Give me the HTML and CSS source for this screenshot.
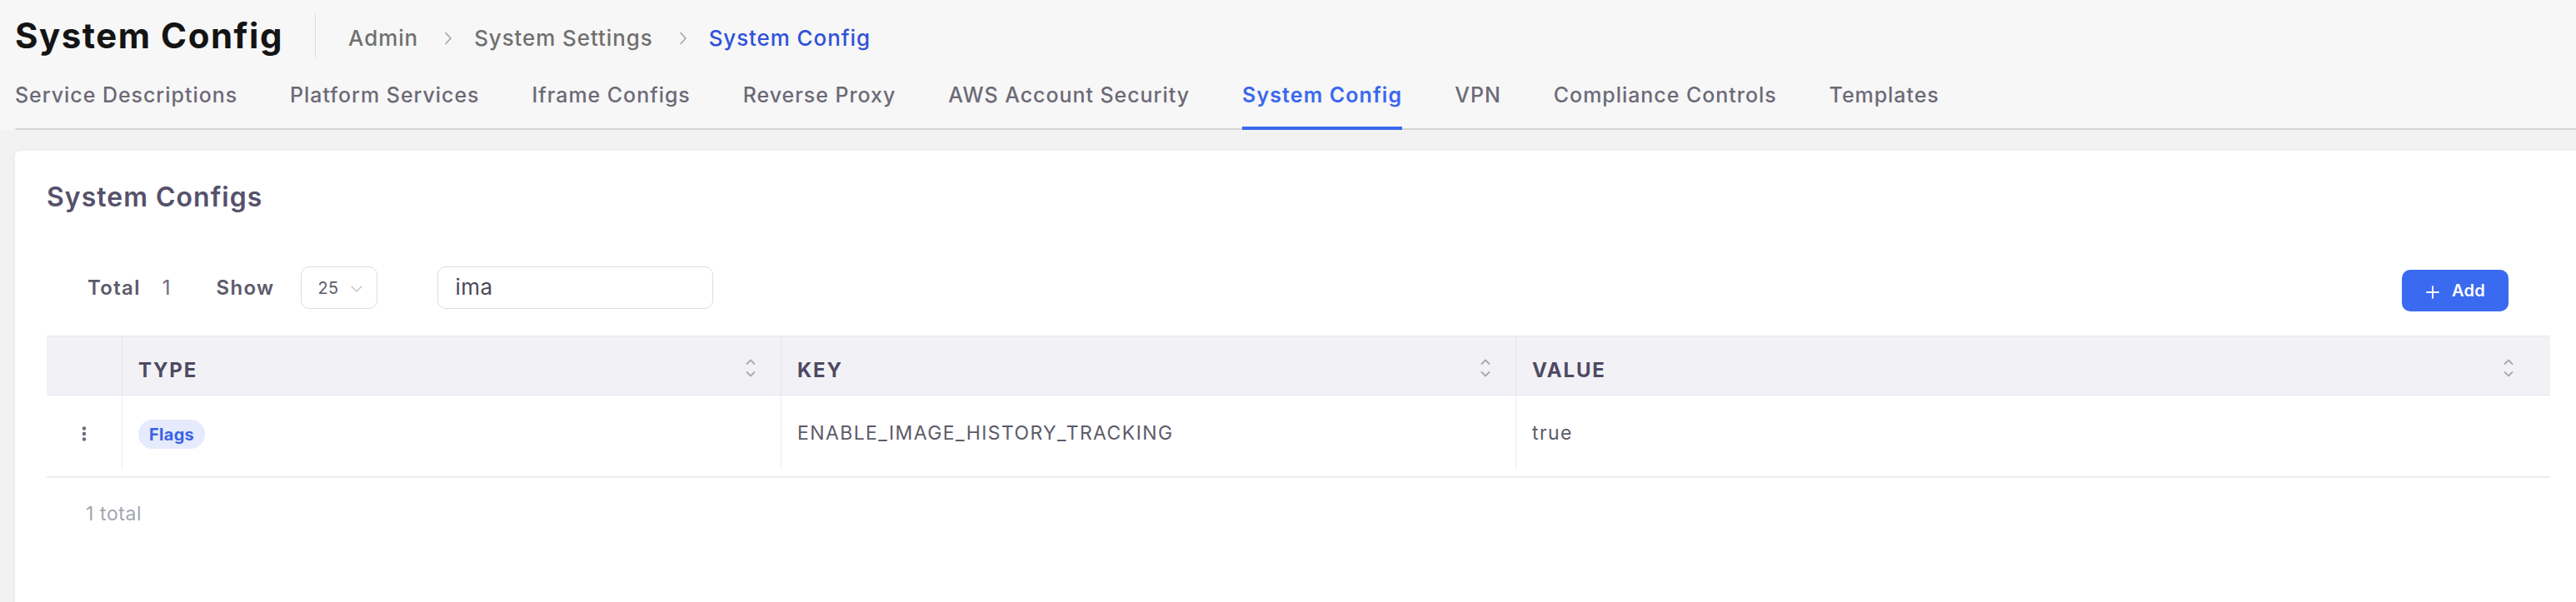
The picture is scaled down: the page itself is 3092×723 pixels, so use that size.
FILE: index.html
```html
<!DOCTYPE html>
<html lang="en">
<head>
<meta charset="utf-8">
<title>System Config</title>
<link rel="stylesheet" href="styles.css">
</head>
<body>
<header class="top">
  <div class="titlebar">
    <h1 class="page-title">System Config</h1>
    <span class="title-sep"></span>
    <nav class="crumbs">
      <span class="crumb">Admin</span>
      <svg class="crumb-chev" viewBox="0 0 10 16" width="10" height="16"><path d="M2 1.5 L8 8 L2 14.5" fill="none" stroke="#a3a3ab" stroke-width="1.6" stroke-linecap="round" stroke-linejoin="round"/></svg>
      <span class="crumb">System Settings</span>
      <svg class="crumb-chev" viewBox="0 0 10 16" width="10" height="16"><path d="M2 1.5 L8 8 L2 14.5" fill="none" stroke="#a3a3ab" stroke-width="1.6" stroke-linecap="round" stroke-linejoin="round"/></svg>
      <span class="crumb crumb-current">System Config</span>
    </nav>
  </div>
  <nav class="tabs">
    <span class="tab">Service Descriptions</span>
    <span class="tab">Platform Services</span>
    <span class="tab">Iframe Configs</span>
    <span class="tab">Reverse Proxy</span>
    <span class="tab">AWS Account Security</span>
    <span class="tab tab-active">System Config</span>
    <span class="tab">VPN</span>
    <span class="tab">Compliance Controls</span>
    <span class="tab">Templates</span>
  </nav>
</header>

<main class="main">
  <section class="card">
    <h2 class="card-title">System Configs</h2>

    <div class="toolbar">
      <span class="tb-label">Total</span>
      <span class="tb-count">1</span>
      <span class="tb-label tb-show">Show</span>
      <div class="select">
        <span class="select-val">25</span>
        <svg class="select-chev" viewBox="0 0 14 8" width="14" height="8"><path d="M1 1 L7 7 L13 1" fill="none" stroke="#c3c2ca" stroke-width="1.4" stroke-linecap="round" stroke-linejoin="round"/></svg>
      </div>
      <div class="search">ima</div>
      <button class="btn-add" type="button">
        <svg class="btn-plus" viewBox="0 0 16 16" width="16" height="16"><path d="M8 1 V15 M1 8 H15" stroke="#fff" stroke-width="1.8" stroke-linecap="round"/></svg>
        <span>Add</span>
      </button>
    </div>

    <div class="table">
      <div class="thead">
        <div class="th th-actions"></div>
        <div class="th"><span>TYPE</span>
          <svg class="sorter" viewBox="0 0 12 24" width="12" height="24"><path d="M1.5 7 L6 2.5 L10.5 7 M1.5 17 L6 21.5 L10.5 17" fill="none" stroke="#a9a8b3" stroke-width="1.8" stroke-linecap="round" stroke-linejoin="round"/></svg></div>
        <div class="th"><span>KEY</span>
          <svg class="sorter" viewBox="0 0 12 24" width="12" height="24"><path d="M1.5 7 L6 2.5 L10.5 7 M1.5 17 L6 21.5 L10.5 17" fill="none" stroke="#a9a8b3" stroke-width="1.8" stroke-linecap="round" stroke-linejoin="round"/></svg></div>
        <div class="th th-last"><span>VALUE</span>
          <svg class="sorter" viewBox="0 0 12 24" width="12" height="24"><path d="M1.5 7 L6 2.5 L10.5 7 M1.5 17 L6 21.5 L10.5 17" fill="none" stroke="#a9a8b3" stroke-width="1.8" stroke-linecap="round" stroke-linejoin="round"/></svg></div>
      </div>
      <div class="tbody">
        <div class="tr">
          <div class="td td-actions">
            <svg class="kebab" viewBox="0 0 6 18" width="6" height="18"><circle cx="3" cy="2.5" r="2.2" fill="#6b6977"/><circle cx="3" cy="9" r="2.2" fill="#6b6977"/><circle cx="3" cy="15.5" r="2.2" fill="#6b6977"/></svg>
          </div>
          <div class="td"><span class="badge">Flags</span></div>
          <div class="td">ENABLE_IMAGE_HISTORY_TRACKING</div>
          <div class="td">true</div>
        </div>
      </div>
    </div>

    <div class="table-foot">1 total</div>
  </section>
</main>
</body>
</html>
```
FILE: styles.css
```css
* { box-sizing: border-box; }

html, body {
  margin: 0;
  padding: 0;
}

body {
  background: #f2f2f2;
  font-family: Inter, "Noto Sans", sans-serif;
  color: #5d5b69;
  height: 723px;
  overflow: hidden;
}

/* ---------- header ---------- */
.top {
  background: #f7f7f7;
}

.titlebar {
  display: flex;
  align-items: center;
  height: 86px;
  padding-left: 18px;
}

.page-title {
  margin: 0;
  font-size: 42px;
  line-height: 48px;
  font-weight: 700;
  letter-spacing: 1.5px;
  color: #141414;
}

.title-sep {
  width: 1px;
  height: 54px;
  background: #dedede;
  margin: 0 39px 0 38px;
}

.crumbs {
  display: flex;
  align-items: center;
  padding-top: 5px;
}

.crumb {
  font-size: 26px;
  line-height: 32px;
  font-weight: 500;
  letter-spacing: 0.9px;
  color: #707070;
}

.crumb-current {
  color: #2f52d9;
}

.crumb-chev {
  margin: 0 26px 0 31px;
}

.tabs {
  display: flex;
  gap: 63px;
  margin-left: 18px;
  padding-left: 0;
  border-bottom: 2px solid #d4d4d8;
  border-bottom-left-radius: 3px;
}

.tab {
  padding: 10px 0 20px;
  line-height: 36px;
  font-size: 25px;
  font-weight: 500;
  letter-spacing: 0.95px;
  color: #6c6a77;
  border-bottom: 4px solid transparent;
  margin-bottom: -2px;
  white-space: nowrap;
}

.tab-active {
  color: #3a68ee;
  font-weight: 600;
  letter-spacing: 1.1px;
  border-bottom-color: #3a68ee;
}

/* ---------- main ---------- */
.main {
  padding: 25px 0 0 18px;
}

.card {
  background: #fff;
  border-radius: 6px 0 0 0;
  box-shadow: 0 1px 6px rgba(0, 0, 0, 0.05);
  padding: 36px 31px 0 38px;
  min-height: 560px;
}

.card-title {
  margin: 0;
  font-size: 32px;
  line-height: 40px;
  font-weight: 600;
  letter-spacing: 1px;
  color: #55516b;
}

/* toolbar */
.toolbar {
  display: flex;
  align-items: flex-start;
  margin-top: 63px;
  padding-left: 49px;
  padding-right: 50px;
}

.tb-label {
  font-size: 24px;
  line-height: 51px;
  font-weight: 600;
  letter-spacing: 1.3px;
  color: #5c5a6b;
}

.tb-count {
  margin-left: 26px;
  font-size: 24px;
  line-height: 51px;
  font-weight: 400;
  color: #6a6878;
}

.tb-show {
  margin-left: 55px;
}

.select {
  margin-left: 32px;
  width: 92px;
  height: 51px;
  border: 1.5px solid #dddce2;
  border-radius: 10px;
  display: flex;
  align-items: center;
  padding-left: 19px;
}

.select-val {
  font-size: 20px;
  color: #5d5b68;
  letter-spacing: 0.3px;
}

.select-chev {
  margin-left: 15px;
  margin-top: 2px;
}

.search {
  margin-left: 72px;
  width: 331px;
  height: 51px;
  border: 1.5px solid #dddce2;
  border-radius: 10px;
  padding-left: 20px;
  font-size: 26px;
  line-height: 47px;
  color: #4b4958;
  letter-spacing: 0.5px;
}

.btn-add {
  margin-left: auto;
  margin-top: 4px;
  width: 128px;
  height: 50px;
  border: 0;
  border-radius: 10px;
  background: #3a6af0;
  color: #fff;
  display: flex;
  align-items: center;
  padding: 0 0 0 29px;
  font-family: Inter, "Noto Sans", sans-serif;
  font-size: 20px;
  font-weight: 600;
  letter-spacing: 0.2px;
}

.btn-plus {
  margin-right: 15px;
  margin-top: 3px;
}

/* table */
.table {
  margin-top: 29px;
  padding-bottom: 8px;
  border-bottom: 2px solid #ececef;
}

.thead,
.tr {
  display: grid;
  grid-template-columns: 90px 791px 882px 1fr;
}

.thead {
  height: 72px;
  background: #f2f2f6;
  border-top: 1px solid #e6e6eb;
  border-bottom: 1px solid #e4e4e9;
}

.th {
  display: flex;
  align-items: center;
  justify-content: space-between;
  padding: 10px 30px 0 19px;
  border-left: 1px solid #e6e6eb;
  font-size: 24px;
  font-weight: 700;
  letter-spacing: 1.8px;
  color: #4e4a62;
}

.th-actions {
  border-left: 0;
}

.th-last {
  padding-right: 44px;
}

.sorter {
  margin-bottom: 5px;
}

.tr {
  height: 89px;
}

.td {
  display: flex;
  align-items: center;
  padding-left: 19px;
  border-left: 1px solid #ececf0;
  font-size: 23px;
  letter-spacing: 1.4px;
  color: #5d5b69;
}

.td-actions {
  border-left: 0;
  padding-left: 0;
  justify-content: center;
}

.kebab {
  margin-top: 2px;
}

.badge {
  display: inline-flex;
  align-items: center;
  height: 35px;
  padding: 0 13px 0 13px;
  border-radius: 18px;
  background: #e5ebfc;
  color: #3a63e6;
  font-size: 20px;
  font-weight: 700;
  letter-spacing: 0.3px;
  margin-top: 4px;
}

.table-foot {
  margin-top: 28px;
  padding-left: 47px;
  font-size: 23px;
  line-height: 30px;
  letter-spacing: 0.6px;
  color: #a5a4ae;
}
```
